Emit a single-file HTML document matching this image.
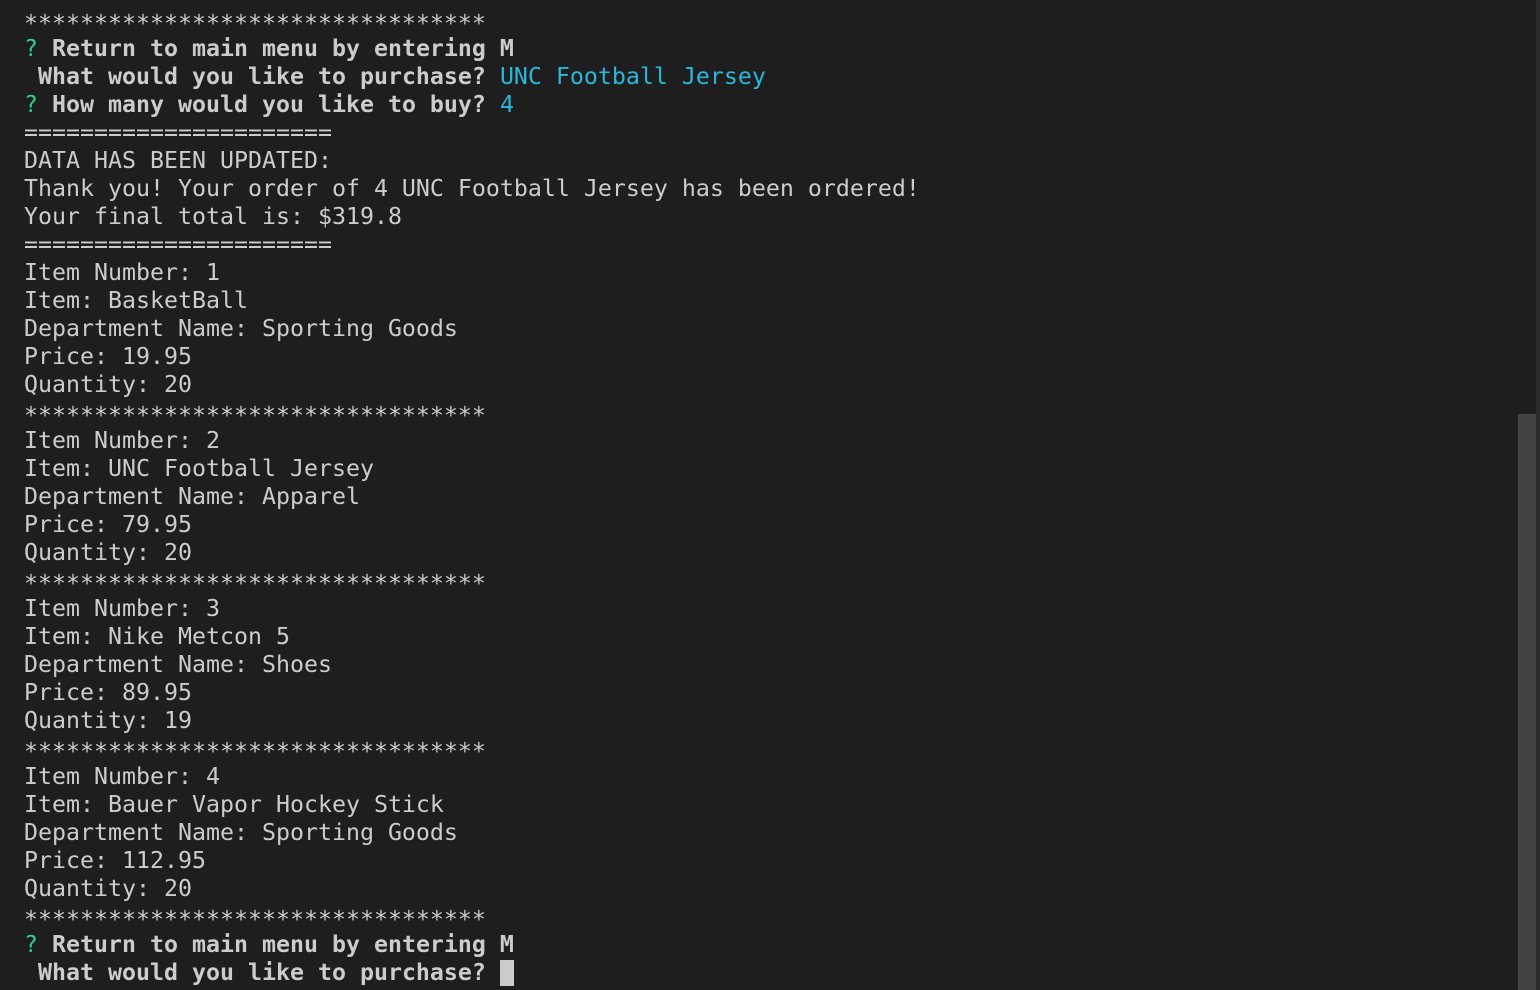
<!DOCTYPE html>
<html><head><style>
html,body{margin:0;padding:0;background:#1e1e1e;width:1540px;height:990px;overflow:hidden}
pre{position:absolute;left:24px;top:7px;margin:0;font-family:"DejaVu Sans Mono","Liberation Mono",monospace;font-size:23.25px;line-height:28px;color:#cccccc;white-space:pre}
.g{color:#23d18b}.c{color:#29b8db}b{font-weight:bold}
.s{position:relative;top:3px}
.cur{display:inline-block;width:14px;height:26px;background:#cccccc;vertical-align:-6px}
.sb{position:absolute;left:1518px;top:414px;width:18px;height:576px;background:#434343}
.edge{position:absolute;left:1536px;top:0;width:4px;height:990px;background:#2b2b2b}
</style></head><body>
<pre><span class="s">*********************************</span>
<span class="g">?</span> <b>Return to main menu by entering M</b>
 <b>What would you like to purchase?</b> <span class="c">UNC Football Jersey</span>
<span class="g">?</span> <b>How many would you like to buy?</b> <span class="c">4</span>
======================
DATA HAS BEEN UPDATED:
Thank you! Your order of 4 UNC Football Jersey has been ordered!
Your final total is: $319.8
======================
Item Number: 1
Item: BasketBall
Department Name: Sporting Goods
Price: 19.95
Quantity: 20
<span class="s">*********************************</span>
Item Number: 2
Item: UNC Football Jersey
Department Name: Apparel
Price: 79.95
Quantity: 20
<span class="s">*********************************</span>
Item Number: 3
Item: Nike Metcon 5
Department Name: Shoes
Price: 89.95
Quantity: 19
<span class="s">*********************************</span>
Item Number: 4
Item: Bauer Vapor Hockey Stick
Department Name: Sporting Goods
Price: 112.95
Quantity: 20
<span class="s">*********************************</span>
<span class="g">?</span> <b>Return to main menu by entering M</b>
 <b>What would you like to purchase?</b> <span class="cur"></span></pre>
<div class="sb"></div><div class="edge"></div>
</body></html>
